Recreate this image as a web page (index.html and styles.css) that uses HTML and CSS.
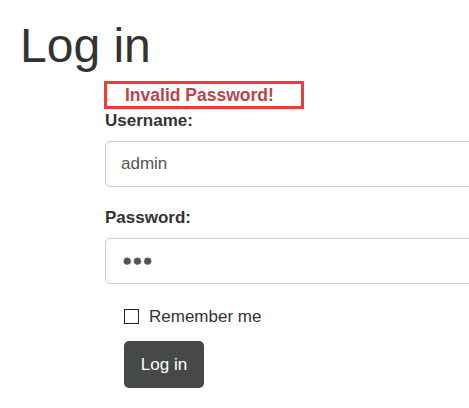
FILE: index.html
```html
<!DOCTYPE html>
<html lang="en">
<head>
<meta charset="utf-8">
<title>Log in</title>
<link rel="stylesheet" href="styles.css">
</head>
<body>
<main class="page">
  <h1 class="title">Log in</h1>
  <form class="login-form">
    <div class="error-box">Invalid Password!</div>
    <div class="form-group">
      <label class="field-label" for="username">Username:</label>
      <input class="field-input" id="username" type="text" value="admin">
    </div>
    <div class="form-group">
      <label class="field-label" for="password">Password:</label>
      <input class="field-input field-secret" id="password" type="text" value="●●●" autocomplete="off">
    </div>
    <div class="form-actions">
      <label class="remember">
        <input class="remember-box" type="checkbox">
        <span>Remember me</span>
      </label>
      <button class="submit-btn" type="button">Log in</button>
    </div>
  </form>
</main>
</body>
</html>
```
FILE: styles.css
```css
html, body {
  margin: 0;
  padding: 0;
  overflow: hidden;
  background: #ffffff;
}

body {
  font-family: "Liberation Sans", Arial, Helvetica, sans-serif;
  font-size: 17px;
  color: #333333;
}

.page {
  padding: 19px 0 0 20px;
}

.title {
  margin: 0;
  font-size: 48px;
  font-weight: 400;
  line-height: 53px;
  color: #333333;
}

.login-form {
  margin: 9px 0 0 85px;
  width: 420px;
  display: flex;
  flex-direction: column;
}

.error-box {
  box-sizing: border-box;
  width: 200px;
  height: 28px;
  margin-left: -1px;
  padding: 0 0 0 18px;
  border: 3px solid #f23b3b;
  color: #b9454b;
  font-weight: 700;
  font-size: 17.5px;
  line-height: 22px;
}

.form-group {
  display: flex;
  flex-direction: column;
  margin-bottom: 19px;
}

.field-label {
  font-weight: 700;
  font-size: 17px;
  line-height: 24px;
  margin-bottom: 8px;
  color: #333333;
}

.field-input {
  box-sizing: border-box;
  width: 100%;
  height: 46px;
  margin: 0;
  padding: 0 15px;
  border: 1px solid #cccccc;
  border-radius: 5px;
  font-family: "Liberation Sans", Arial, sans-serif;
  font-size: 17px;
  color: #555555;
  background: #ffffff;
  outline: none;
}

.field-secret {
  padding-left: 16px;
}

.form-actions {
  margin: 2px 0 0 19px;
  display: flex;
  flex-direction: column;
  align-items: flex-start;
  gap: 12px;
}

.remember {
  display: flex;
  align-items: center;
  gap: 10px;
  height: 24px;
  font-size: 17px;
  line-height: 24px;
  color: #333333;
}

.remember-box {
  appearance: none;
  -webkit-appearance: none;
  box-sizing: border-box;
  width: 15px;
  height: 15px;
  margin: 0 0 2px 0;
  border: 1px solid #222222;
  border-radius: 0;
  background: #ffffff;
}

.submit-btn {
  box-sizing: border-box;
  width: 80px;
  height: 47px;
  padding: 0;
  border: none;
  border-radius: 5px;
  background: #474848;
  color: #ffffff;
  font-family: "Liberation Sans", Arial, sans-serif;
  font-size: 17px;
}
```
